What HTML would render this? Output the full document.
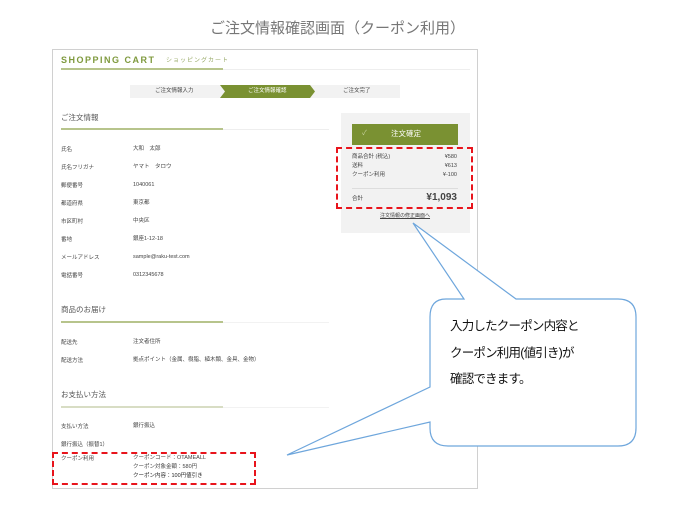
<!DOCTYPE html>
<html><head><meta charset="utf-8"><style>
body{margin:0;width:675px;height:522px;background:#fff;position:relative;overflow:hidden;font-family:"Liberation Sans","Noto Sans CJK JP",sans-serif;}
.a{position:absolute;white-space:nowrap;line-height:1;}
.s{font-size:5.5px;color:#444;}
.h{font-size:7.5px;color:#555;}
</style></head><body>
<div class="a" style="left:0;width:675px;text-align:center;top:21px;font-size:15px;color:#777;">ご注文情報確認画面（クーポン利用）</div>
<div class="a" style="left:52px;top:49px;width:424px;height:438px;border:1px solid #d0d0d0;"></div>
<div class="a" style="left:61px;top:56px;font-size:9px;font-weight:bold;letter-spacing:1.5px;color:#7f9a3e;">SHOPPING CART</div>
<div class="a" style="left:166px;top:58px;font-size:6px;color:#9aab6a;letter-spacing:1px;">ショッピングカート</div>
<div class="a" style="left:61px;top:68px;width:162px;height:2px;background:#b7c48c;"></div>
<div class="a" style="left:223px;top:69px;width:247px;height:1px;background:#eee;"></div>
<div class="a" style="left:130px;top:85px;width:270px;height:13px;background:#f2f2f2;"></div>
<svg class="a" style="left:200px;top:85px" width="120" height="13"><polygon points="20,0 110,0 115,6.5 110,13 20,13 25,6.5" fill="#7a9132"/></svg>
<div class="a s" style="left:155px;top:89px;">ご注文情報入力</div>
<div class="a s" style="left:248px;top:89px;color:#fff;">ご注文情報確認</div>
<div class="a s" style="left:343px;top:89px;">ご注文完了</div>
<div class="a h" style="left:61px;top:114px;">ご注文情報</div>
<div class="a" style="left:61px;top:128px;width:162px;height:2px;background:#b7c48c;"></div>
<div class="a" style="left:223px;top:129px;width:106px;height:1px;background:#eee;"></div>
<div class="a s" style="left:61px;top:148px;">氏名</div><div class="a s" style="left:133px;top:147px;">大和　太郎</div>
<div class="a s" style="left:61px;top:166px;">氏名フリガナ</div><div class="a s" style="left:133px;top:165px;">ヤマト　タロウ</div>
<div class="a s" style="left:61px;top:184px;">郵便番号</div><div class="a s" style="left:133px;top:183px;">1040061</div>
<div class="a s" style="left:61px;top:202px;">都道府県</div><div class="a s" style="left:133px;top:201px;">東京都</div>
<div class="a s" style="left:61px;top:220px;">市区町村</div><div class="a s" style="left:133px;top:219px;">中央区</div>
<div class="a s" style="left:61px;top:238px;">番地</div><div class="a s" style="left:133px;top:237px;">銀座1-12-18</div>
<div class="a s" style="left:61px;top:256px;">メールアドレス</div><div class="a s" style="left:133px;top:255px;">sample@raku-test.com</div>
<div class="a s" style="left:61px;top:274px;">電話番号</div><div class="a s" style="left:133px;top:273px;">0312345678</div>
<div class="a" style="left:341px;top:113px;width:129px;height:120px;background:#f2f2f2;"></div>
<div class="a" style="left:352px;top:124px;width:106px;height:21px;background:#7a9132;"></div>
<div class="a" style="left:362px;top:130px;font-size:7px;color:#c8d3a0;">✓</div>
<div class="a" style="left:391px;top:130px;font-size:7.5px;color:#fff;">注文確定</div>
<div class="a s" style="left:352px;top:155px;">商品合計 (税込)</div><div class="a s" style="right:218px;top:155px;">¥580</div>
<div class="a s" style="left:352px;top:164px;">送料</div><div class="a s" style="right:218px;top:164px;">¥613</div>
<div class="a s" style="left:352px;top:173px;">クーポン利用</div><div class="a s" style="right:218px;top:173px;">¥-100</div>
<div class="a" style="left:352px;top:188px;width:106px;height:1px;background:#ddd;"></div>
<div class="a s" style="left:352px;top:197px;">合計</div>
<div class="a" style="right:218px;top:193px;font-size:10px;font-weight:bold;color:#444;">¥1,093</div>
<div class="a s" style="left:380px;top:214px;text-decoration:underline;font-size:5px;">注文情報の修正画面へ</div>
<div class="a" style="left:336px;top:147px;width:133px;height:58px;border:2.5px dashed #e8141c;"></div>
<div class="a h" style="left:61px;top:306px;">商品のお届け</div>
<div class="a" style="left:61px;top:321px;width:162px;height:2px;background:#b7c48c;"></div>
<div class="a" style="left:223px;top:322px;width:106px;height:1px;background:#f2f2f2;"></div>
<div class="a s" style="left:61px;top:341px;">配送先</div><div class="a s" style="left:133px;top:340px;">注文者住所</div>
<div class="a s" style="left:61px;top:359px;">配送方法</div><div class="a s" style="left:133px;top:358px;">拠点ポイント（金属、樹脂、植木類、金具、金物）</div>
<div class="a h" style="left:61px;top:391px;">お支払い方法</div>
<div class="a" style="left:61px;top:406px;width:162px;height:2px;background:#d8ddc4;"></div>
<div class="a" style="left:223px;top:407px;width:106px;height:1px;background:#f2f2f2;"></div>
<div class="a s" style="left:61px;top:425px;">支払い方法</div><div class="a s" style="left:133px;top:424px;">銀行振込</div>
<div class="a s" style="left:61px;top:443px;">銀行振込（振替1）</div>
<div class="a s" style="left:61px;top:457px;">クーポン利用</div>
<div class="a s" style="left:133px;top:456px;">クーポンコード：OTAMEALL</div>
<div class="a s" style="left:133px;top:465px;">クーポン対象金額：580円</div>
<div class="a s" style="left:133px;top:474px;color:#222;">クーポン内容：100円値引き</div>
<div class="a" style="left:52px;top:452px;width:200px;height:29px;border:2.5px dashed #e8141c;"></div>
<svg class="a" style="left:0;top:0" width="675" height="522">
<path d="M446,299 L464,299 L413,223 L516,299 L618,299 Q636,299 636,317 L636,428 Q636,446 618,446 L448,446 Q430,446 430,428 L430,422 L287,455 L430,387 L430,317 Q430,299 446,299 Z" fill="#fff" stroke="#6ea6dc" stroke-width="1.2"/>
</svg>
<div class="a" style="left:450px;top:320px;font-size:12.5px;color:#111;letter-spacing:-0.8px;">入力したクーポン内容と</div>
<div class="a" style="left:450px;top:347px;font-size:12.5px;color:#111;letter-spacing:-0.8px;">クーポン利用(値引き)が</div>
<div class="a" style="left:450px;top:373px;font-size:12.5px;color:#111;letter-spacing:-0.8px;">確認できます。</div>
</body></html>
